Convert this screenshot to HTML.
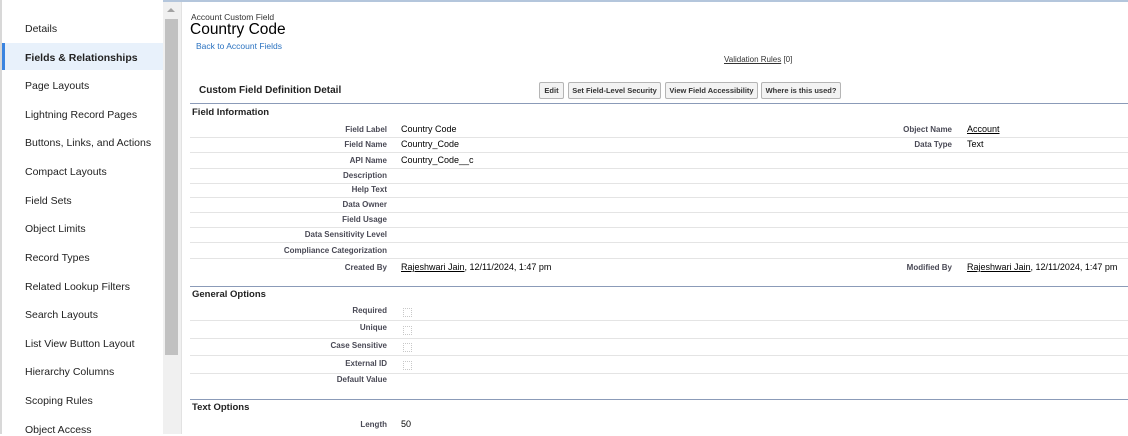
<!DOCTYPE html>
<html><head><style>
body{margin:0;width:1128px;height:434px;overflow:hidden;background:#fff;font-family:"Liberation Sans",Arial,sans-serif;position:relative}
.a{position:absolute;white-space:nowrap}
.sb{position:absolute;left:0;top:0;width:163px;height:434px;border-left:2px solid #d8d8d8;box-sizing:border-box;background:#fff}
.si{position:absolute;left:23px;font-size:10.5px;color:#222}
.lab{position:absolute;font-size:8px;font-weight:bold;color:#4a4a56;text-align:right;white-space:nowrap}
.val{position:absolute;font-size:9px;color:#000;white-space:nowrap}
.ln{position:absolute;left:190px;right:0;height:1px;background:#e4e4e4}
.bl{position:absolute;left:190px;right:0;height:1px;background:#8b9bb8}
.sh{position:absolute;left:192px;font-size:9.5px;font-weight:bold;color:#222}
.btn{position:absolute;top:82px;height:15px;border:1px solid #b5b5b5;border-radius:2px;background:#f3f3f3;font-size:7.5px;font-weight:bold;color:#333;line-height:15px;text-align:center}
.cb{position:absolute;left:403px;width:7px;height:7px;border:1px dotted #c8c8c8}
u{text-decoration:underline}
</style></head><body>
<div class="a" style="left:0;top:0;width:1128px;height:2px;background:#b4c6dc"></div>
<div class="sb">
<div class="a" style="left:0;top:43px;width:161px;height:27px;background:#e8f1fb"></div>
<div class="a" style="left:0;top:43px;width:3px;height:27px;background:#3a84e0"></div>
<div class="si" style="top:23px">Details</div>
<div class="si" style="top:52px;font-weight:bold">Fields &amp; Relationships</div>
<div class="si" style="top:80px">Page Layouts</div>
<div class="si" style="top:109px">Lightning Record Pages</div>
<div class="si" style="top:137px">Buttons, Links, and Actions</div>
<div class="si" style="top:166px">Compact Layouts</div>
<div class="si" style="top:195px">Field Sets</div>
<div class="si" style="top:223px">Object Limits</div>
<div class="si" style="top:252px">Record Types</div>
<div class="si" style="top:281px">Related Lookup Filters</div>
<div class="si" style="top:309px">Search Layouts</div>
<div class="si" style="top:338px">List View Button Layout</div>
<div class="si" style="top:366px">Hierarchy Columns</div>
<div class="si" style="top:395px">Scoping Rules</div>
<div class="si" style="top:424px">Object Access</div>
</div>
<div class="a" style="left:163px;top:2px;width:18px;height:432px;background:#f0f0f0;border-right:1px solid #e2e2e2"></div>
<div class="a" style="left:165px;top:19px;width:13px;height:336px;background:#c1c1c1"></div>
<div class="a" style="left:167px;top:8px;width:0;height:0;border-left:4px solid transparent;border-right:4px solid transparent;border-bottom:4px solid #a3a3a3"></div>

<div class="a" style="left:191px;top:12px;font-size:8.5px;color:#333">Account Custom Field</div>
<div class="a" style="left:190px;top:21px;font-size:15.5px;color:#000">Country Code</div>
<div class="a" style="left:196px;top:41px;font-size:8.5px;color:#2a72c0">Back to Account Fields</div>
<div class="a" style="left:724px;top:55px;font-size:8px;color:#333"><u>Validation Rules</u> [0]</div>

<div class="a" style="left:199px;top:85px;font-size:10px;font-weight:bold;color:#222">Custom Field Definition Detail</div>
<div class="btn" style="left:539px;width:23px">Edit</div>
<div class="btn" style="left:568px;width:91px">Set Field-Level Security</div>
<div class="btn" style="left:665px;width:91px">View Field Accessibility</div>
<div class="btn" style="left:761px;width:78px">Where is this used?</div>

<div class="bl" style="top:103px"></div>
<div class="sh" style="top:107px">Field Information</div>

<div class="lab" style="right:741px;top:125px">Field Label</div><div class="val" style="left:401px;top:124px">Country Code</div>
<div class="lab" style="right:176px;top:125px">Object Name</div><div class="val" style="left:967px;top:124px"><u>Account</u></div>
<div class="ln" style="top:137px"></div>
<div class="lab" style="right:741px;top:140px">Field Name</div><div class="val" style="left:401px;top:139px">Country_Code</div>
<div class="lab" style="right:176px;top:140px">Data Type</div><div class="val" style="left:967px;top:139px">Text</div>
<div class="ln" style="top:152px"></div>
<div class="lab" style="right:741px;top:156px">API Name</div><div class="val" style="left:401px;top:155px">Country_Code__c</div>
<div class="ln" style="top:168px"></div>
<div class="lab" style="right:741px;top:171px">Description</div>
<div class="ln" style="top:183px"></div>
<div class="lab" style="right:741px;top:185px">Help Text</div>
<div class="ln" style="top:197px"></div>
<div class="lab" style="right:741px;top:200px">Data Owner</div>
<div class="ln" style="top:212px"></div>
<div class="lab" style="right:741px;top:215px">Field Usage</div>
<div class="ln" style="top:227px"></div>
<div class="lab" style="right:741px;top:230px">Data Sensitivity Level</div>
<div class="ln" style="top:242px"></div>
<div class="lab" style="right:741px;top:246px">Compliance Categorization</div>
<div class="ln" style="top:258px"></div>
<div class="lab" style="right:741px;top:263px">Created By</div><div class="val" style="left:401px;top:262px"><u>Rajeshwari Jain</u>, 12/11/2024, 1:47 pm</div>
<div class="lab" style="right:176px;top:263px">Modified By</div><div class="val" style="left:967px;top:262px"><u>Rajeshwari Jain</u>, 12/11/2024, 1:47 pm</div>

<div class="bl" style="top:286px"></div>
<div class="sh" style="top:289px">General Options</div>
<div class="lab" style="right:741px;top:306px">Required</div><div class="cb" style="top:308px"></div>
<div class="ln" style="top:320px"></div>
<div class="lab" style="right:741px;top:323px">Unique</div><div class="cb" style="top:326px"></div>
<div class="ln" style="top:338px"></div>
<div class="lab" style="right:741px;top:341px">Case Sensitive</div><div class="cb" style="top:343px"></div>
<div class="ln" style="top:355px"></div>
<div class="lab" style="right:741px;top:359px">External ID</div><div class="cb" style="top:361px"></div>
<div class="ln" style="top:373px"></div>
<div class="lab" style="right:741px;top:375px">Default Value</div>

<div class="bl" style="top:399px"></div>
<div class="sh" style="top:402px">Text Options</div>
<div class="lab" style="right:741px;top:420px">Length</div><div class="val" style="left:401px;top:419px">50</div>
</body></html>
